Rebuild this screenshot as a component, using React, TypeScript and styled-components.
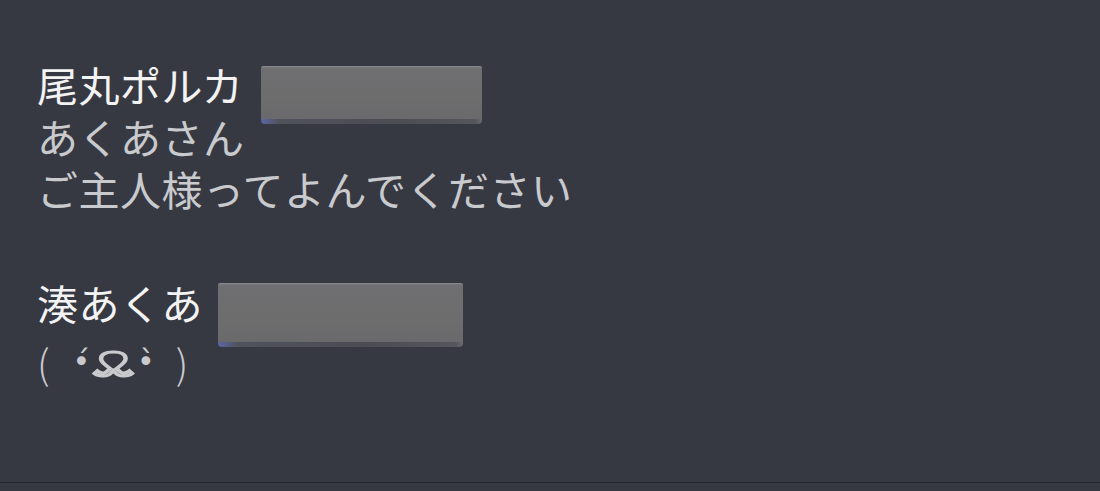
import {FC} from "react";
import styled, {createGlobalStyle} from "styled-components";

// Global
const GlobalStyle = createGlobalStyle`
	html, body {
		margin: 0;
		padding: 0;
		background: #373942;
	}
	body {
		font-family: "Noto Sans CJK JP", "Noto Sans", sans-serif;
	}
`;

// Styling
const Screen = styled.div`
	width: 1100px;
	height: 491px;
	display: flex;
	flex-direction: column;
	background: #373942;
	overflow: hidden;
`;

const Thread = styled.div`
	height: 483px;
	box-sizing: border-box;
	padding: 58px 0 0 37px;
	display: flex;
	flex-direction: column;
	gap: 62px;
	border-bottom: 1px solid #24252c;
`;

const Message = styled.div`
	display: flex;
	flex-direction: column;
`;

const NameRow = styled.div<{$gap: number}>`
	display: flex;
	align-items: flex-start;
	height: 52px;
	gap: ${(p) => p.$gap}px;
`;

const Name = styled.span`
	font-size: 41px;
	line-height: 52px;
	color: #f3f3f4;
	letter-spacing: 0.5px;
	white-space: nowrap;
`;

const Redacted = styled.div<{$w: number; $h: number; $top: number}>`
	width: ${(p) => p.$w}px;
	height: ${(p) => p.$h}px;
	margin-top: ${(p) => p.$top}px;
	flex-shrink: 0;
	border-radius: 2px 2px 4px 4px;
	background:
		linear-gradient(90deg, #5a67a6 0%, #50525c 8%, #4c4d53 60%, #55565c 97%, #6a6b70 100%) bottom / 100% 5px no-repeat,
		linear-gradient(180deg, #7b7b7e 0%, #6f6f71 5%, #6d6d6e 55%, #69696b 100%);
	box-shadow: inset 0 1px 0 #86878b;
`;

const Line = styled.div`
	font-size: 41px;
	line-height: 52px;
	color: #c9cacd;
	letter-spacing: 0.5px;
	white-space: nowrap;
`;

const Kaomoji = styled(Line)`
	margin-top: 8px;
	display: flex;
	align-items: center;
	font-size: 40px;
	letter-spacing: 0;
`;

const Paren = styled.span<{$side: "l" | "r"}>`
	font-weight: 300;
	margin: ${(p) => (p.$side === "l" ? "0 22px 0 0" : "0 0 0 20px")};
`;

const Eye = styled.span`
	font-family: "DejaVu Sans", sans-serif;
	font-size: 30px;
	margin: 0 1px;
`;

const Mouth = styled.span`
	font-family: "DejaVu Sans", sans-serif;
	font-size: 44px;
	display: inline-block;
	color: transparent;
	-webkit-text-stroke: 3px #c9cacd;
	transform: scaleX(1.5) translateY(-1px);
	margin: 0 9px;
`;

const App: FC = () => {
	return (
		<>
			<GlobalStyle />
			<Screen>
				<Thread>
					<Message>
						<NameRow $gap={18}>
							<Name>尾丸ポルカ</Name>
							<Redacted $w={221} $h={58} $top={8} />
						</NameRow>
						<Line>あくあさん</Line>
						<Line>ご主人様ってよんでください</Line>
					</Message>
					<Message>
						<NameRow $gap={15}>
							<Name>湊あくあ</Name>
							<Redacted $w={245} $h={64} $top={7} />
						</NameRow>
						<Kaomoji>
							<Paren $side="l">(</Paren>
							<Eye>•́</Eye>
							<Mouth>ᴥ</Mouth>
							<Eye>•̀</Eye>
							<Paren $side="r">)</Paren>
						</Kaomoji>
					</Message>
				</Thread>
			</Screen>
		</>
	);
};

export default App;
